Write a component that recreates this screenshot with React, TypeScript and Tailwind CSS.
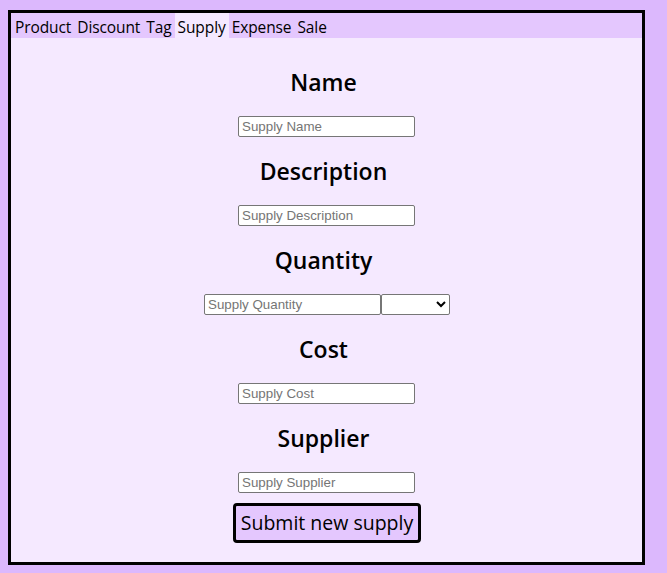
import { useState } from "react"

const tabs = ["Product", "Discount", "Tag", "Supply", "Expense", "Sale"]

const fields = [
    { label: "Name", placeholder: "Supply Name" },
    { label: "Description", placeholder: "Supply Description" },
    { label: "Quantity", placeholder: "Supply Quantity", unit: true },
    { label: "Cost", placeholder: "Supply Cost" },
    { label: "Supplier", placeholder: "Supply Supplier" },
]

export default function App() {
    const [active, setActive] = useState("Supply")

    return (
        <div className="min-h-[573px] bg-[#dcb8fd] pt-[10px] pl-[8px] font-['Open_Sans',sans-serif] text-black">
            <div className="w-[637px] h-[555px] border-[3px] border-black bg-[#f5e9ff] flex flex-col">
                {/* Tabs */}
                <div className="flex h-[25px] bg-[#e4c7fe] pl-[1px]">
                    {tabs.map((tab) => (
                        <button
                            key={tab}
                            onClick={() => setActive(tab)}
                            className={`px-[3px] pt-[3px] text-[15.5px] leading-[22px] tracking-[-0.1px] ${active === tab ? "bg-[#f5e9ff]" : ""}`}
                        >
                            {tab}
                        </button>
                    ))}
                </div>

                {/* Form */}
                <form className="flex flex-col items-center pt-[10px]" onSubmit={(e) => e.preventDefault()}>
                    {fields.map((f) => (
                        <div key={f.label} className="flex flex-col items-center">
                            <h2 className="my-[20px] text-[23px] leading-[28px] font-semibold -translate-x-[3px]">{f.label}</h2>
                            <div className="flex">
                                <input
                                    placeholder={f.placeholder}
                                    className={`w-[177px] h-[21px] px-[3px] bg-white border border-[#767676] rounded-[2px] font-['Liberation_Sans',Arial,sans-serif] text-[13.33px] placeholder:text-[#757575] ${f.unit ? "ml-[1px]" : ""}`}
                                />
                                {f.unit && (
                                    <select className="w-[69px] h-[21px] bg-white border border-[#767676] rounded-[2px] text-[13.33px] font-['Liberation_Sans',Arial,sans-serif]">
                                        <option value=""></option>
                                        <option value="unit">unit</option>
                                        <option value="kg">kg</option>
                                    </select>
                                )}
                            </div>
                        </div>
                    ))}
                    <button
                        type="submit"
                        className="mt-[10px] ml-[1px] h-[40px] w-[188px] border-[3px] border-black rounded-[4px] bg-[#e4c7fe] text-[19.5px] leading-[34px]"
                    >
                        Submit new supply
                    </button>
                </form>
            </div>
        </div>
    )
}
